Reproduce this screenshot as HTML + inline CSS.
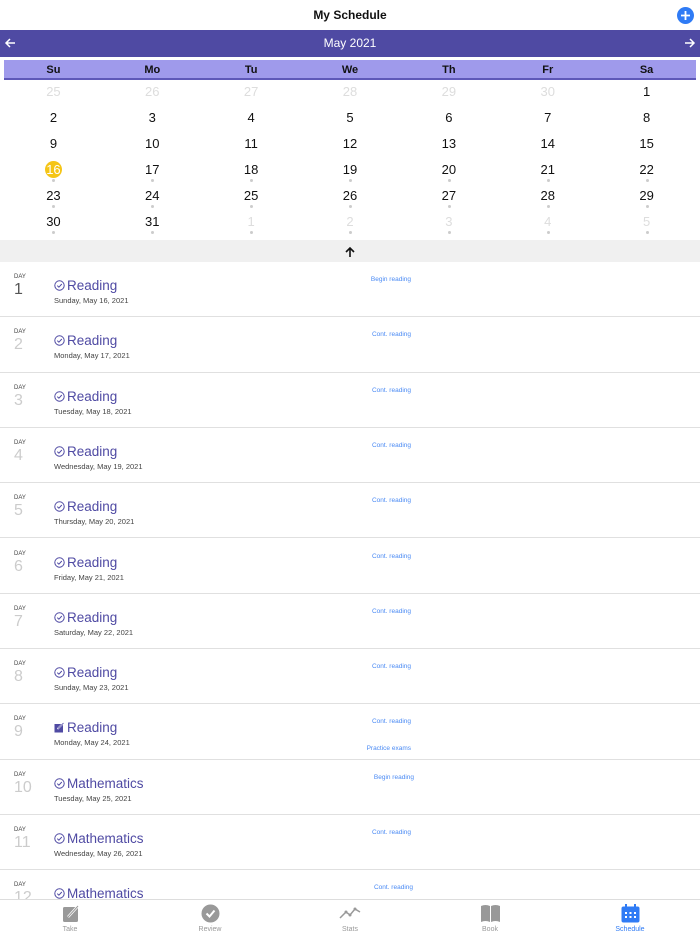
<!DOCTYPE html>
<html><head><meta charset="utf-8"><style>
*{margin:0;padding:0;box-sizing:border-box}
body{width:700px;height:934px;overflow:hidden;background:#fff;font-family:"Liberation Sans",sans-serif;position:relative}
.abs{position:absolute}
.hdr{top:0;left:0;width:700px;height:30px;text-align:center;font-size:12px;font-weight:bold;line-height:30px;color:#111}
.plus{top:7px;left:677px;width:17px;height:17px;border-radius:50%;background:#2f7bf5}
.bar{top:30px;left:0;width:700px;height:27px;background:#4f4aa3;color:#fff;text-align:center;font-size:12px;line-height:27px}
.wk{top:60px;left:4px;width:692px;height:20px;background:#9f9aeb;border-bottom:2px solid #5e58b8;display:flex}
.wk div,.cr div{flex:1;text-align:center}
.wk div{font-size:11px;font-weight:bold;line-height:20px;color:#111}
.cr{left:4px;width:692px;height:26px;display:flex}
.cr div{font-size:13px;color:#111;line-height:17px;position:relative}
.cr .g{color:#ddd}
.cr .d:after{content:"";position:absolute;left:50%;margin-left:-1px;top:18px;width:3px;height:3px;border-radius:50%;background:#ccc}
.cr .t span{display:inline-block;width:17px;height:17px;border-radius:50%;background:#f5c517;color:#fff;line-height:17px}
.gb{top:240px;left:0;width:700px;height:22px;background:#f0f0f0}
.row{left:0;width:700px;height:55.3px;border-bottom:1.5px solid #e0e0e0}
.row .dl{position:absolute;left:14px;top:12px;font-size:6px;color:#444}
.row .dn{position:absolute;left:14px;top:19px;font-size:16px;color:#ccc}
.row .ti{position:absolute;left:54px;top:16px;font-size:13.5px;color:#4f4aa3;display:flex;align-items:center}
.row .ti svg{margin-right:2px}
.row .dt{position:absolute;left:54px;top:34px;font-size:7.5px;color:#444}
.row .ac{position:absolute;right:289px;top:14px;font-size:6.5px;color:#4a8af4}
.tab{top:899px;left:0;width:700px;height:35px;border-top:1px solid #ddd;display:flex;background:#fff}
.tab div{flex:1;text-align:center;font-size:7px;color:#999;padding-top:4px}
.tab svg{display:block;margin:0 auto 3px;height:19px}
</style></head><body>
<div class="abs hdr">My Schedule</div>
<svg class="abs" style="top:7px;left:677px" width="17" height="17" viewBox="0 0 17 17"><circle cx="8.5" cy="8.5" r="8.5" fill="#2f7bf5"/><path d="M8.5 4V13M4 8.5H13" stroke="#fff" stroke-width="1.8"/></svg>
<div class="abs bar">May 2021</div>
<svg class="abs" style="top:37px;left:4px" width="12" height="12" viewBox="0 0 12 12"><path d="M11 6H2M6 2L2 6L6 10" stroke="#fff" stroke-width="1.5" fill="none"/></svg>
<svg class="abs" style="top:37px;left:684px" width="12" height="12" viewBox="0 0 12 12"><path d="M1 6H10M6 2L10 6L6 10" stroke="#fff" stroke-width="1.5" fill="none"/></svg>
<div class="abs wk"><div>Su</div><div>Mo</div><div>Tu</div><div>We</div><div>Th</div><div>Fr</div><div>Sa</div></div>
<div class="abs cr" style="top:83px"><div class="g">25</div><div class="g">26</div><div class="g">27</div><div class="g">28</div><div class="g">29</div><div class="g">30</div><div>1</div></div>
<div class="abs cr" style="top:109px"><div>2</div><div>3</div><div>4</div><div>5</div><div>6</div><div>7</div><div>8</div></div>
<div class="abs cr" style="top:135px"><div>9</div><div>10</div><div>11</div><div>12</div><div>13</div><div>14</div><div>15</div></div>
<div class="abs cr" style="top:161px"><div class="d t"><span>16</span></div><div class="d">17</div><div class="d">18</div><div class="d">19</div><div class="d">20</div><div class="d">21</div><div class="d">22</div></div>
<div class="abs cr" style="top:187px"><div class="d">23</div><div class="d">24</div><div class="d">25</div><div class="d">26</div><div class="d">27</div><div class="d">28</div><div class="d">29</div></div>
<div class="abs cr" style="top:213px"><div class="d">30</div><div class="d">31</div><div class="d g">1</div><div class="d g">2</div><div class="d g">3</div><div class="d g">4</div><div class="d g">5</div></div>
<div class="abs gb"></div>
<svg class="abs" style="top:246px;left:344px" width="12" height="12" viewBox="0 0 12 12"><path d="M6 11V2M2 6L6 2L10 6" stroke="#111" stroke-width="1.6" fill="none"/></svg>

<svg width="0" height="0" style="position:absolute"><defs><symbol id="ck" viewBox="0 0 11 11"><circle cx="5.5" cy="5.5" r="4.7" fill="none" stroke="#4f4aa3" stroke-width="1"/><path d="M3.3 5.6L4.9 7.2L7.8 4" fill="none" stroke="#4f4aa3" stroke-width="1"/></symbol></defs></svg>

<div class="abs row" style="top:262px"><div class="dl">DAY</div><div class="dn" style="color:#555">1</div><div class="ti"><svg width="11" height="11"><use href="#ck"/></svg>Reading</div><div class="dt">Sunday, May 16, 2021</div><div class="ac">Begin reading</div></div>
<div class="abs row" style="top:317.3px"><div class="dl">DAY</div><div class="dn">2</div><div class="ti"><svg width="11" height="11"><use href="#ck"/></svg>Reading</div><div class="dt">Monday, May 17, 2021</div><div class="ac">Cont. reading</div></div>
<div class="abs row" style="top:372.6px"><div class="dl">DAY</div><div class="dn">3</div><div class="ti"><svg width="11" height="11"><use href="#ck"/></svg>Reading</div><div class="dt">Tuesday, May 18, 2021</div><div class="ac">Cont. reading</div></div>
<div class="abs row" style="top:427.9px"><div class="dl">DAY</div><div class="dn">4</div><div class="ti"><svg width="11" height="11"><use href="#ck"/></svg>Reading</div><div class="dt">Wednesday, May 19, 2021</div><div class="ac">Cont. reading</div></div>
<div class="abs row" style="top:483.2px"><div class="dl">DAY</div><div class="dn">5</div><div class="ti"><svg width="11" height="11"><use href="#ck"/></svg>Reading</div><div class="dt">Thursday, May 20, 2021</div><div class="ac">Cont. reading</div></div>
<div class="abs row" style="top:538.5px"><div class="dl">DAY</div><div class="dn">6</div><div class="ti"><svg width="11" height="11"><use href="#ck"/></svg>Reading</div><div class="dt">Friday, May 21, 2021</div><div class="ac">Cont. reading</div></div>
<div class="abs row" style="top:593.8px"><div class="dl">DAY</div><div class="dn">7</div><div class="ti"><svg width="11" height="11"><use href="#ck"/></svg>Reading</div><div class="dt">Saturday, May 22, 2021</div><div class="ac">Cont. reading</div></div>
<div class="abs row" style="top:649.1px"><div class="dl">DAY</div><div class="dn">8</div><div class="ti"><svg width="11" height="11"><use href="#ck"/></svg>Reading</div><div class="dt">Sunday, May 23, 2021</div><div class="ac">Cont. reading</div></div>
<div class="abs row" style="top:704.4px"><div class="dl">DAY</div><div class="dn">9</div><div class="ti"><svg width="11" height="11" viewBox="0 0 11 11"><rect x="0.5" y="2" width="8.5" height="8.5" fill="#4f4aa3"/><path d="M3.5 7L9.5 1" stroke="#fff" stroke-width="1.6"/><path d="M4 6.5L9.5 1" stroke="#4f4aa3" stroke-width="0.8"/></svg>Reading</div><div class="dt">Monday, May 24, 2021</div><div class="ac">Cont. reading</div><div class="ac" style="top:41px">Practice exams</div></div>
<div class="abs row" style="top:759.7px"><div class="dl">DAY</div><div class="dn">10</div><div class="ti"><svg width="11" height="11"><use href="#ck"/></svg>Mathematics</div><div class="dt">Tuesday, May 25, 2021</div><div class="ac" style="right:286px">Begin reading</div></div>
<div class="abs row" style="top:815px"><div class="dl">DAY</div><div class="dn">11</div><div class="ti"><svg width="11" height="11"><use href="#ck"/></svg>Mathematics</div><div class="dt">Wednesday, May 26, 2021</div><div class="ac">Cont. reading</div></div>
<div class="abs row" style="top:870.3px"><div class="dl">DAY</div><div class="dn">12</div><div class="ti"><svg width="11" height="11"><use href="#ck"/></svg>Mathematics</div><div class="ac" style="right:287px">Cont. reading</div></div>

<div class="abs tab">
<div><svg width="19" height="19" viewBox="0 0 19 19"><rect x="2" y="3" width="15" height="15" rx="1.5" fill="#999"/><path d="M7 13L17 2" stroke="#fff" stroke-width="2.5"/><path d="M7 13L17 2" stroke="#999" stroke-width="1"/></svg>Take</div>
<div><svg width="19" height="19" viewBox="0 0 19 19"><circle cx="9.5" cy="9.5" r="9" fill="#999"/><path d="M5.5 9.5L8.5 12.5L13.5 6.5" stroke="#fff" stroke-width="2" fill="none"/></svg>Review</div>
<div><svg width="22" height="19" viewBox="0 0 22 19"><path d="M1 14L7 8L11 11L16 5L21 8" stroke="#999" stroke-width="1.5" fill="none"/><g fill="#999"><circle cx="7" cy="8" r="1.5"/><circle cx="11" cy="11" r="1.5"/><circle cx="16" cy="5" r="1.5"/></g></svg>Stats</div>
<div><svg width="21" height="19" viewBox="0 0 21 19"><path d="M1 2Q5.5 0 10 2V18Q5.5 16 1 18Z M11 2Q15.5 0 20 2V18Q15.5 16 11 18Z" fill="#999"/></svg>Book</div>
<div style="color:#2f7bf5"><svg width="19" height="19" viewBox="0 0 19 19"><rect x="0.5" y="2.5" width="18" height="16" rx="2" fill="#2f7bf5"/><rect x="4" y="0" width="2" height="4" fill="#2f7bf5"/><rect x="13" y="0" width="2" height="4" fill="#2f7bf5"/><g fill="#fff"><rect x="4" y="8" width="2" height="2"/><rect x="8.5" y="8" width="2" height="2"/><rect x="13" y="8" width="2" height="2"/><rect x="4" y="12" width="2" height="2"/><rect x="8.5" y="12" width="2" height="2"/><rect x="13" y="12" width="2" height="2"/></g></svg>Schedule</div>
</div>
</body></html>
